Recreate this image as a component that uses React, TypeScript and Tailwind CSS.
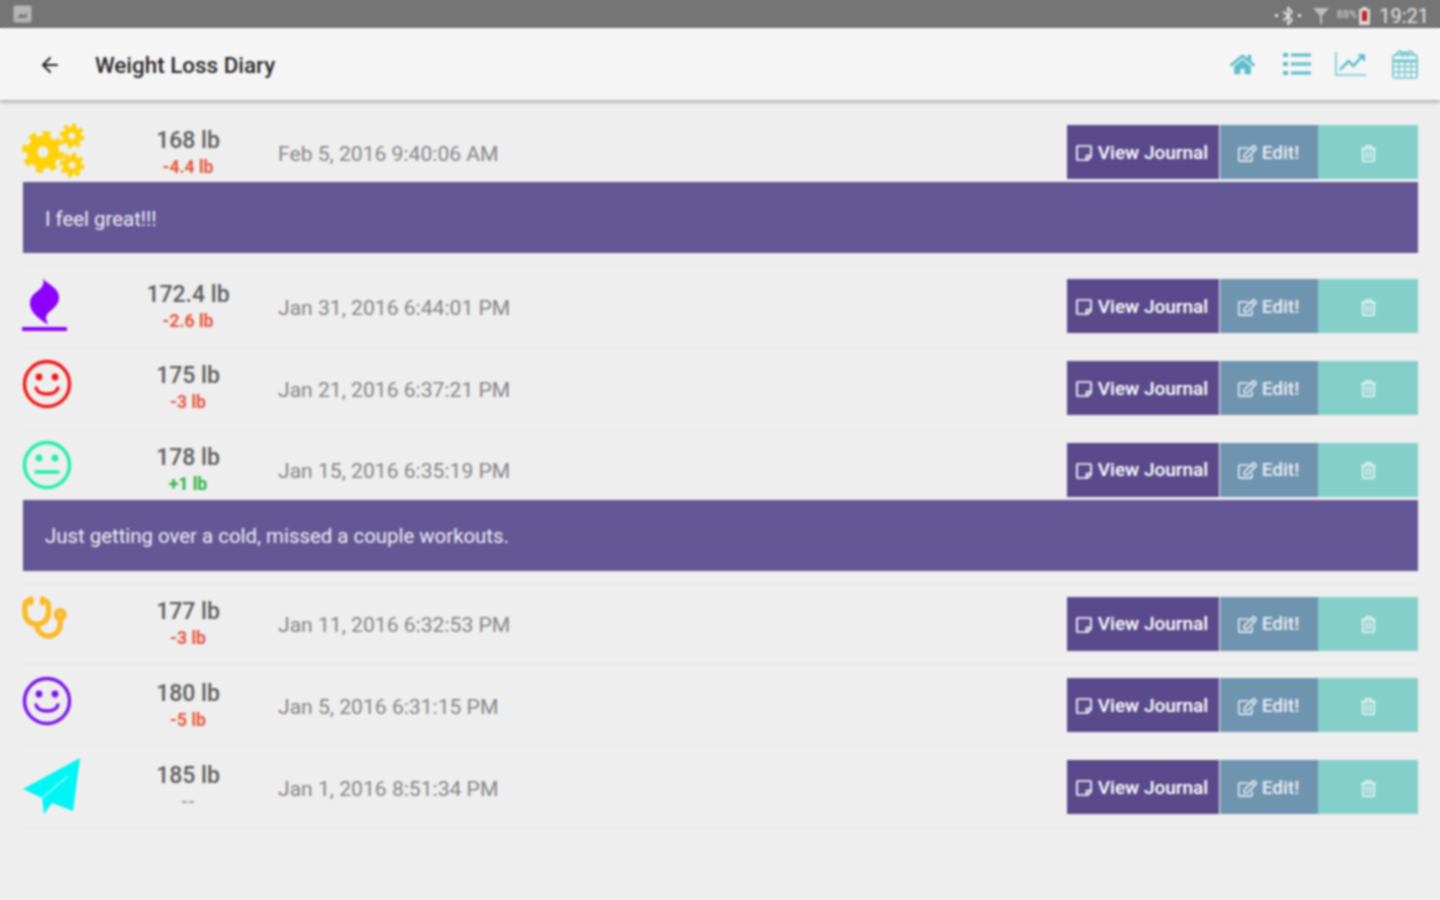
import React from "react";
import { FaHome, FaRegStickyNote, FaRegEdit, FaRegTrashAlt } from "react-icons/fa";
import { Stethoscope, Bluetooth, ArrowLeft } from "lucide-react";

function Smile({ color, neutral }: { color: string; neutral?: boolean }) {
  return (
    <svg width="50" height="50" viewBox="0 0 50 50" fill="none">
      <circle cx="25" cy="25" r="22.5" stroke={color} strokeWidth="3.4" />
      <circle cx="17" cy="18" r="3.4" fill={color} />
      <circle cx="33" cy="18" r="3.4" fill={color} />
      {neutral ? (
        <path d="M14 32H36" stroke={color} strokeWidth="3.4" strokeLinecap="round" />
      ) : (
        <path d="M14 29C17 37 33 37 36 29" stroke={color} strokeWidth="3.4" strokeLinecap="round" />
      )}
    </svg>
  );
}

function Gear({ cx, cy, r }: { cx: number; cy: number; r: number }) {
  return (
    <g fill="none" stroke="#ffd20a">
      <circle cx={cx} cy={cy} r={r * 0.52} strokeWidth={r * 0.5} />
      <circle cx={cx} cy={cy} r={r * 0.86} strokeWidth={r * 0.28} pathLength={16} strokeDasharray="1 1" />
    </g>
  );
}

function Gears() {
  return (
    <svg width="64" height="58" viewBox="0 0 64 58">
      <Gear cx={21} cy={30} r={21} />
      <Gear cx={50} cy={14} r={12.5} />
      <Gear cx={50} cy={43} r={12.5} />
    </svg>
  );
}

function Flame() {
  return (
    <svg width="46" height="58" viewBox="0 0 46 58">
      <path d="M21 1C25 8 38 10 37 22C36 31 25 34 24 40C24 43 25 45 26 48C20 43 8 37 8 26C8 18 15 15 19 11C22 8 22 4 21 1Z" fill="#8b00ff" />
      <rect x="0" y="50" width="45" height="4" rx="1" fill="#8b00ff" />
    </svg>
  );
}

function Plane() {
  return (
    <svg width="60" height="60" viewBox="0 0 60 60">
      <path d="M58 1L1 32L20 41L22 57L30 46L51 54Z" fill="#00f5f5" />
      <path d="M20 41L46 19" stroke="#a8f4f4" strokeWidth="1.2" />
    </svg>
  );
}

function ListIcon() {
  return (
    <svg width="28" height="22" viewBox="0 0 28 22" fill="#5cbccb">
      <rect x="0" y="0" width="5" height="4" rx="1" />
      <rect x="0" y="9" width="5" height="4" rx="1" />
      <rect x="0" y="18" width="5" height="4" rx="1" />
      <rect x="8" y="0.5" width="20" height="3" />
      <rect x="8" y="9.5" width="20" height="3" />
      <rect x="8" y="18.5" width="20" height="3" />
    </svg>
  );
}

function Calendar() {
  return (
    <svg width="26" height="29" viewBox="0 0 26 29" fill="none" stroke="#6cc3ce">
      <rect x="1" y="5" width="24" height="23" rx="2" strokeWidth="1.6" />
      <path d="M1.5 11H24.5" strokeWidth="3" />
      <path d="M4 6C6 0 9 0 10.5 5C12 1 14 1 15.5 5C17 0 20 0 22 6" strokeWidth="2" />
      <path d="M7 11V28M13 11V28M19 11V28M1 16.5H25M1 22H25" strokeWidth="1.3" />
    </svg>
  );
}

type Entry = {
  icon: React.ReactNode;
  iconClass: string;
  weight: string;
  delta: string;
  deltaClass: string;
  date: string;
  note?: string;
};

const red = "text-[#e8573f]";
const entries: Entry[] = [
  { icon: <Gears />, iconClass: "pb-[2px]", weight: "168 lb", delta: "-4.4 lb", deltaClass: red, date: "Feb 5, 2016 9:40:06 AM", note: "I feel great!!!" },
  { icon: <Flame />, iconClass: "pb-[0px]", weight: "172.4 lb", delta: "-2.6 lb", deltaClass: red, date: "Jan 31, 2016 6:44:01 PM" },
  { icon: <Smile color="#f81414" />, iconClass: "pb-[8px]", weight: "175 lb", delta: "-3 lb", deltaClass: red, date: "Jan 21, 2016 6:37:21 PM" },
  { icon: <Smile color="#1cf0a6" neutral />, iconClass: "pb-[9px]", weight: "178 lb", delta: "+1 lb", deltaClass: "text-[#2fb344]", date: "Jan 15, 2016 6:35:19 PM", note: "Just getting over a cold, missed a couple workouts." },
  { icon: <Stethoscope size={47} color="#fdb927" strokeWidth={2.7} className="-ml-[1px]" />, iconClass: "pb-[10px]", weight: "177 lb", delta: "-3 lb", deltaClass: red, date: "Jan 11, 2016 6:32:53 PM" },
  { icon: <Smile color="#7a12ee" />, iconClass: "pb-[8px]", weight: "180 lb", delta: "-5 lb", deltaClass: red, date: "Jan 5, 2016 6:31:15 PM" },
  { icon: <Plane />, iconClass: "pb-[0px]", weight: "185 lb", delta: "--", deltaClass: "text-[#a0a0a0]", date: "Jan 1, 2016 8:51:34 PM" },
];

function Row({ e }: { e: Entry }) {
  return (
    <div className={`border-b border-[#e8e8e8] mb-[13px] ${e.note ? "pb-[12.2px]" : "pb-[13.67px]"}`}>
      <div className="flex h-[54px] items-center">
        <div className={`-ml-[1px] flex h-[54px] w-[81px] shrink-0 items-center justify-start ${e.iconClass}`}>{e.icon}</div>
        <div className="flex w-[170px] shrink-0 flex-col items-center pt-[1px]">
          <span className="translate-y-[1px] text-[23px] leading-[28px] font-medium text-[#5c5c5c]">{e.weight}</span>
          <span className={`text-[17.5px] leading-[26px] font-bold ${e.deltaClass}`}>{e.delta}</span>
        </div>
        <div className="ml-[5px] flex-1 pt-[3px] text-[21.1px] text-[#858585]">{e.date}</div>
        <div className="flex h-[54px] shrink-0 text-white">
          <div className="flex w-[152px] items-center justify-center gap-[5px] bg-[#5a4a8c] pr-[3px] pt-[2px] text-[19px] font-medium">
            <FaRegStickyNote size={18} />
            <span>View Journal</span>
          </div>
          <div className="ml-[1px] flex w-[98px] items-center justify-center gap-[5px] bg-[#6f94b0] pr-[1px] pt-[2px] text-[19px] font-medium text-[#e8eef3]">
            <FaRegEdit size={19} />
            <span>Edit!</span>
          </div>
          <div className="flex w-[100px] items-center justify-center bg-[#84cfc9] pt-[2px] text-[#eef9f7]">
            <FaRegTrashAlt size={17} />
          </div>
        </div>
      </div>
      {e.note ? (
        <div className="mt-[3px] flex h-[71px] items-center bg-[#635795] pl-[22px] pt-[3px] text-[20.4px] text-[#f0eef6]">{e.note}</div>
      ) : null}
    </div>
  );
}

export default function App() {
  return (
    <div className="relative h-[900px] w-[1440px] overflow-hidden bg-[#eeeeee] font-['Roboto',sans-serif]">
      <div className="flex h-[28px] items-center justify-between bg-[#757575] pl-[13px] pr-[11px]">
        <svg width="19" height="18" viewBox="0 0 19 18" fill="none">
          <rect x="0.5" y="0.5" width="18" height="17" rx="2" fill="#b5b5b5" />
          <path d="M4 13L8 8L11 11L14 7V13Z" fill="#7a7a7a" />
        </svg>
        <div className="flex items-center pt-[3px] text-[#dedede]">
          <div className="flex items-center">
            <span className="h-[3px] w-[3px] bg-[#dedede]" />
            <Bluetooth size={20} strokeWidth={2.2} />
            <span className="h-[3px] w-[3px] bg-[#dedede]" />
          </div>
          <svg className="ml-[12px]" width="16" height="18" viewBox="0 0 16 18" fill="#bdbdbd">
            <path d="M0 1H16L9 9V17H7V9Z" />
          </svg>
          <span className="ml-[8px] text-[11px] font-medium text-[#c4c4c4]">88%</span>
          <svg className="ml-[2px]" width="11" height="18" viewBox="0 0 11 18">
            <rect x="3" y="0" width="5" height="2" fill="#d8d8d8" />
            <rect x="0" y="2" width="11" height="16" fill="#d8d8d8" />
            <rect x="3" y="4" width="5" height="10" fill="#c81e1e" />
          </svg>
          <span className="ml-[9px] text-[20px] leading-none text-[#e3e3e3]">19:21</span>
        </div>
      </div>

      <div className="flex h-[72px] items-center justify-between bg-[#f5f5f5] pl-[38px] pr-[22px] shadow-[0_2px_4px_rgba(0,0,0,0.3)]">
        <div className="flex items-center pt-[3px]">
          <ArrowLeft size={24} color="#222222" strokeWidth={2} />
          <span className="ml-[33px] text-[22.4px] font-medium text-[#2a2a2a]">Weight Loss Diary</span>
        </div>
        <div className="flex items-center text-[#5cbccb]">
          <FaHome size={25} />
          <span className="ml-[28px]"><ListIcon /></span>
          <div className="ml-[24px] flex h-[24px] w-[31px] items-center justify-center border-b-2 border-l-2 border-[#8ed2db]">
            <svg width="29" height="22" viewBox="0 0 30 22" fill="none">
              <path d="M3 18L12 9L17 14L27 3" stroke="#5cbccb" strokeWidth="2.6" />
              <path d="M21 2H29V10Z" fill="#5cbccb" />
            </svg>
          </div>
          <span className="ml-[26px]"><Calendar /></span>
        </div>
      </div>

      <div className="pl-[23px] pr-[22px] pt-[25px]">
        {entries.map((e) => (
          <Row key={e.date} e={e} />
        ))}
      </div>

      <div className="pointer-events-none absolute inset-0 backdrop-blur-[0.9px]" />
    </div>
  );
}
